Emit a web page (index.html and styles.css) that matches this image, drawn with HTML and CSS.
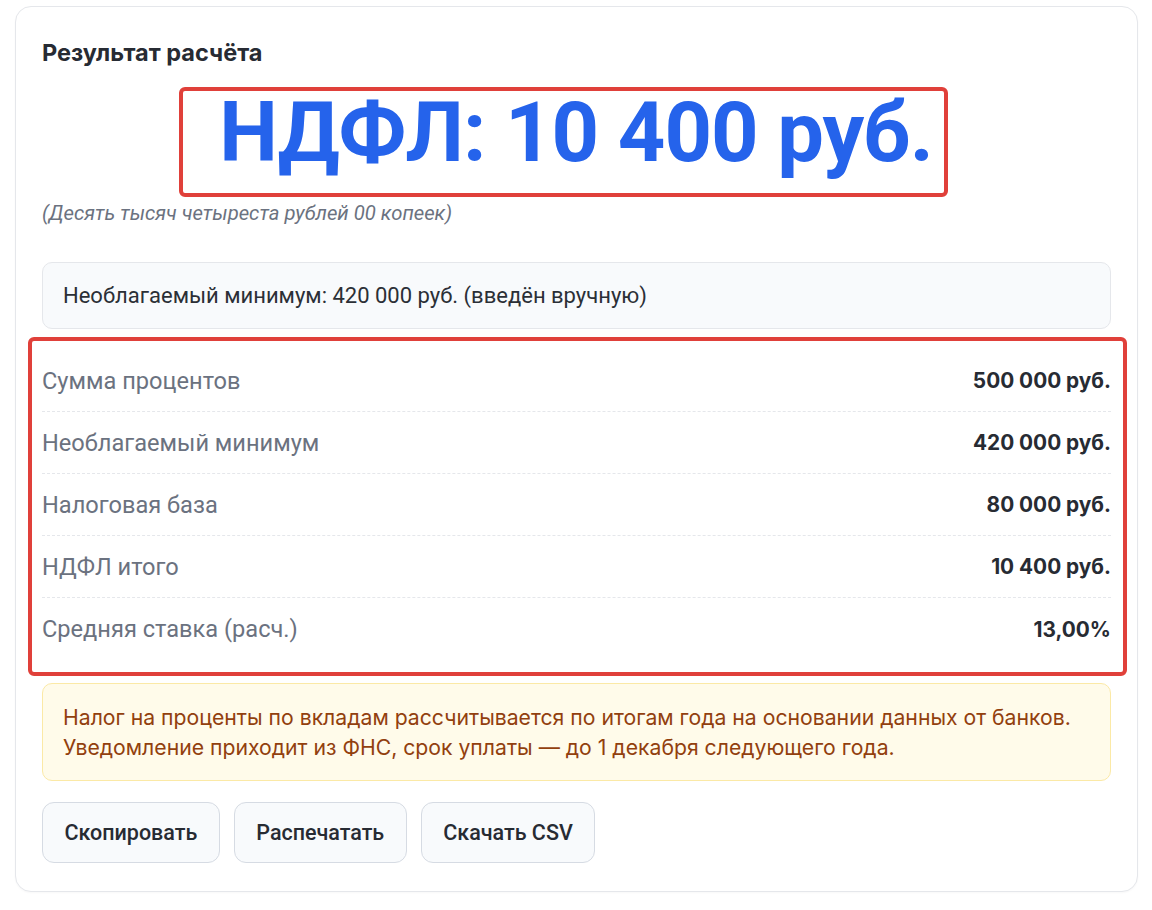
FILE: index.html
```html
<!DOCTYPE html>
<html lang="ru">
<head>
<meta charset="utf-8">
<title>Результат расчёта</title>
<link rel="stylesheet" href="styles.css">
</head>
<body>
<div class="card">
  <h2 class="title">Результат расчёта</h2>
  <div class="big-wrap">
    <span class="big">НДФЛ: 10 400 руб.</span>
  </div>
  <div class="words">(Десять тысяч четыреста рублей 00 копеек)</div>
  <div class="info">Необлагаемый минимум: 420 000 руб. (введён вручную)</div>
  <div class="rows">
    <div class="row"><span class="label">Сумма процентов</span><span class="value">500 000 руб.</span></div>
    <div class="row"><span class="label">Необлагаемый минимум</span><span class="value">420 000 руб.</span></div>
    <div class="row"><span class="label">Налоговая база</span><span class="value">80 000 руб.</span></div>
    <div class="row"><span class="label">НДФЛ итого</span><span class="value">10 400 руб.</span></div>
    <div class="row"><span class="label">Средняя ставка (расч.)</span><span class="value">13,00%</span></div>
  </div>
  <div class="note">Налог на проценты по вкладам рассчитывается по итогам года на основании данных от банков.<br>Уведомление приходит из ФНС, срок уплаты — до 1 декабря следующего года.</div>
  <div class="actions">
    <button class="btn btn-copy">Скопировать</button>
    <button class="btn btn-print">Распечатать</button>
    <button class="btn btn-csv">Скачать CSV</button>
  </div>
</div>
</body>
</html>
```
FILE: styles.css
```css
* { box-sizing: border-box; }
html, body { margin: 0; padding: 0; background: #ffffff; }
body {
  padding: 6px 14px 20px 15px;
  font-family: Roboto, "Noto Sans", sans-serif;
  color: #1f2937;
}
.card {
  border: 1px solid #e5e7eb;
  border-radius: 16px;
  background: #fff;
  padding: 32px 26px 28px 26px;
  box-shadow: 0 1px 2px rgba(0,0,0,0.03);
}
.title {
  margin: 0;
  font-family: Inter, Roboto, sans-serif;
  font-weight: 700;
  font-size: 23.5px;
  line-height: 28px;
  color: #272b33;
}
.big-wrap {
  margin-top: 20px;
  display: flex;
  justify-content: center;
}
.big {
  display: block;
  margin-left: -26px;
  border: 4px solid #e0403a;
  border-radius: 6px;
  padding: 0 11px 19px 36px;
  font-family: Roboto, sans-serif;
  font-weight: 700;
  font-size: 83px;
  line-height: 83px;
  letter-spacing: -1px;
  color: #2563eb;
  white-space: nowrap;
}
.words {
  margin-top: 4px;
  font-style: italic;
  font-size: 20.3px;
  line-height: 24px;
  color: #6b7280;
}
.info {
  margin-top: 37px;
  background: #f8fafc;
  border: 1px solid #e5e7eb;
  border-radius: 10px;
  padding: 20px 20px;
  font-size: 22px;
  line-height: 25px;
  color: #2b2f36;
}
.rows {
  margin: 8px -16px 0 -14px;
  border: 4px solid #e0403a;
  border-radius: 6px;
  padding: 9px 12px 12px 10px;
}
.row {
  display: flex;
  justify-content: space-between;
  align-items: center;
  height: 62px;
  border-bottom: 1px dashed #e5e7eb;
}
.row:last-child { border-bottom: none; }
.label {
  font-size: 23.6px;
  color: #6b7280;
}
.value {
  font-family: Inter, Roboto, sans-serif;
  font-weight: 700;
  font-size: 20.8px;
  color: #272b33;
}
.note {
  margin-top: 7px;
  background: #fffbea;
  border: 1px solid #fbe9a6;
  border-radius: 10px;
  padding: 18px 20px 18px 20px;
  font-family: Inter, Roboto, sans-serif;
  font-size: 21.2px;
  line-height: 30px;
  color: #92400e;
}
.actions {
  margin-top: 21px;
  display: flex;
  gap: 14px;
}
.btn {
  height: 61px;
  padding: 0 21.5px;
  background: #f8fafc;
  border: 1px solid #d6dbe3;
  border-radius: 12px;
  font-family: Roboto, sans-serif;
  font-weight: 500;
  font-size: 21.5px;
  color: #272b33;
  cursor: pointer;
}
```
